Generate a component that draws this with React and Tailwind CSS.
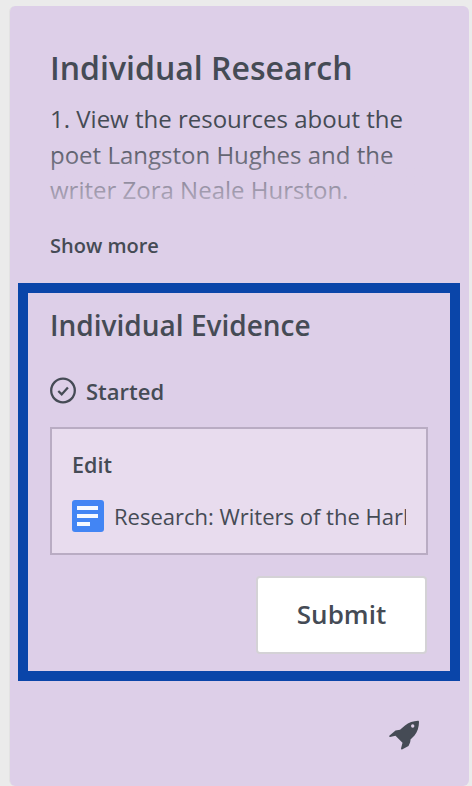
import React from 'react';

export default function App() {
  return (
    <div className="h-[786px] w-[472px] overflow-hidden bg-[#ebebeb] pt-[6px] pl-[9px] font-['Open_Sans',sans-serif] text-[#454b55]">
      <div className="flex h-[780px] w-[460px] flex-col rounded-[6px] border-l border-[#e3e3e3] bg-[#ddcfe8] pl-[8px]">
        <div className="pt-[41px] pl-[32px] pr-[40px]">
          <h1 className="text-[32px] leading-[42px] font-semibold whitespace-nowrap">Individual Research</h1>
          <div className="relative mt-[12px] text-[24px] leading-[35.5px]">
            <p>1. View the resources about the poet Langston Hughes and the writer Zora Neale Hurston.</p>
            <div className="absolute inset-x-0 bottom-0 h-[72px] bg-gradient-to-b from-[#ddcfe800] to-[#ddcfe8c8]" />
          </div>
          <button className="mt-[24px] block text-[20px] leading-[28px] font-semibold">Show more</button>
        </div>
        <div className="mt-[23px] h-[398px] w-[442px] border-[10px] border-[#0a45a9] pt-[13px] pl-[22px] pr-[23px]">
          <h2 className="text-[28px] leading-[38px] font-semibold whitespace-nowrap">Individual Evidence</h2>
          <div className="mt-[32px] flex items-center gap-[9px]">
            <svg width="27" height="27" viewBox="0 0 27 27" fill="none" stroke="#454b55">
              <circle cx="13" cy="13.5" r="11.8" strokeWidth="2.3" />
              <path d="M8.300 14l3.400 3.400 6.200-7" strokeWidth="2.3" />
            </svg>
            <span className="text-[22px] leading-[30px] font-semibold">Started</span>
          </div>
          <div className="mt-[21px] h-[128px] w-[378px] border-2 border-[#b9acc3] bg-[#e8dcee] pt-[21px] pl-[20px] pr-[20px]">
            <div className="text-[21.5px] leading-[30px] font-semibold">Edit</div>
            <div className="mt-[20px] flex items-center gap-[10px]">
              <svg className="shrink-0" width="32" height="32" viewBox="0 0 32 32">
                <rect width="32" height="32" rx="3" fill="#4285f4" />
                <rect x="5" y="6" width="21" height="4" fill="#fff" opacity="0.95" />
                <rect x="5" y="14" width="21" height="4" fill="#fff" opacity="0.95" />
                <rect x="5" y="22" width="13" height="4" fill="#fff" opacity="0.95" />
              </svg>
              <span className="min-w-0 overflow-hidden text-[22px] leading-[30px] whitespace-nowrap">Research: Writers of the Harlem Renaissance</span>
            </div>
          </div>
          <div className="mt-[21px] flex justify-end">
            <button className="h-[78px] w-[171px] rounded-[4px] border-2 border-[#d4d2d6] bg-white text-[26px] font-semibold">Submit</button>
          </div>
        </div>
        <div className="mt-[39px] flex justify-end pr-[50px]">
          <svg width="30" height="30" viewBox="0 0 30 30" fill="#454b55">
            <path fillRule="evenodd" d="M29 .8C24.500 1 19.500 2.500 16 5.500L11 9.700L6.500 10.500L.3 15.800C0 16.400.2 17 1 17L6.500 15.800L13.500 22.800L12 28.500C12 29.300 12.500 29.600 13 29.400L19.500 26C21 23 21.500 21.500 21.500 19.500L25.500 15.500C28.500 12 30 6.500 30 2C30 1.200 29.700 .8 29 .8ZM23.700 4.300a1.700 1.700 0 1 0 .01 3.400a1.700 1.700 0 0 0-.01-3.400Z" />
          </svg>
        </div>
      </div>
    </div>
  );
}
